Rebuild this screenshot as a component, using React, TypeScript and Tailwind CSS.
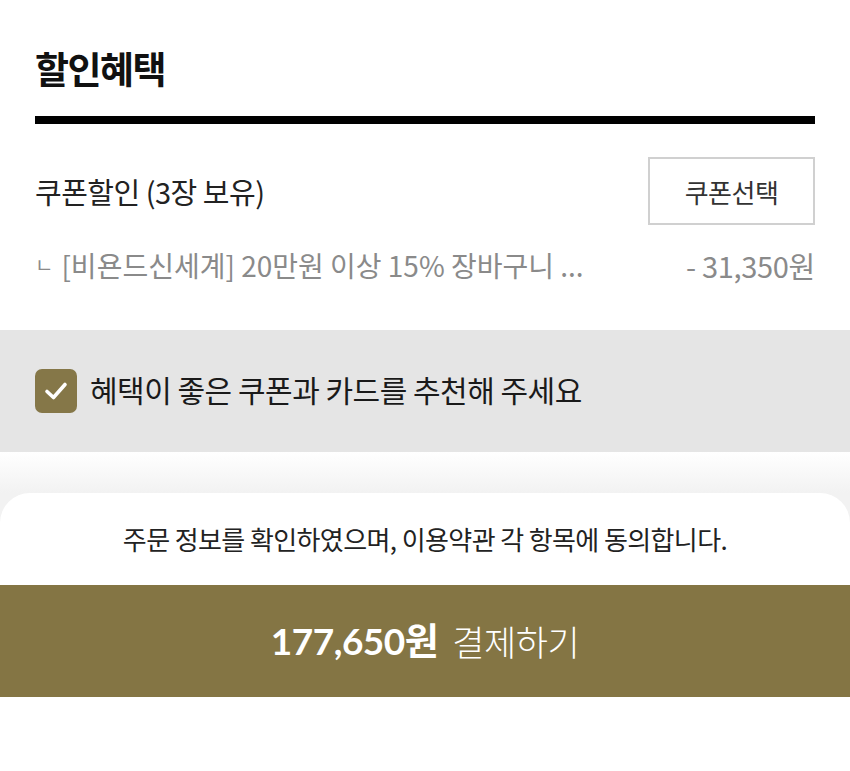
export default function App() {
  const font = { fontFamily: '"Noto Sans CJK KR", "Noto Sans", sans-serif' };
  return (
    <div className="w-[850px] h-[771px] bg-white overflow-hidden" style={font}>
      {/* 할인혜택 */}
      <div className="px-[35px] pt-[44px]">
        <h2 className="text-[37px] leading-[48px] font-bold text-[#111] tracking-[-1.5px]">할인혜택</h2>
        <div className="mt-[24px] h-[8px] bg-black" />
        <div className="flex items-center justify-between mt-[33px]">
          <span className="text-[29px] leading-[42px] text-[#222] tracking-[-0.5px]">쿠폰할인 (3장 보유)</span>
          <button className="w-[167px] h-[68px] border-2 border-[#d0d0d0] bg-white text-[26px] text-[#333] tracking-[-0.5px]">
            쿠폰선택
          </button>
        </div>
        <div className="flex items-center justify-between mt-[19px] text-[28px] leading-[42px] text-[#8a8a8a]">
          <span>
            <span className="text-[20px] align-top mr-[8px]">ㄴ</span>[비욘드신세계] 20만원 이상 15% 장바구니 ...
          </span>
          <span className="text-[29px] tracking-[-0.3px]">- 31,350원</span>
        </div>
      </div>

      {/* 추천 체크 */}
      <div className="mt-[44px] h-[122px] bg-[#e5e5e5] flex items-center px-[35px] gap-[13px]">
        <div className="w-[42px] h-[44px] rounded-[7px] bg-[#857748] flex items-center justify-center">
          <svg width="24" height="20" viewBox="0 0 24 20" fill="none">
            <path d="M3 10.5 L9.5 16.5 L21 3.5" stroke="white" strokeWidth="3.6" strokeLinecap="round" strokeLinejoin="round" />
          </svg>
        </div>
        <span className="text-[30px] leading-[40px] pb-[4px] text-[#1a1a1a] tracking-[-0.5px]">혜택이 좋은 쿠폰과 카드를 추천해 주세요</span>
      </div>

      {/* 하단 시트 */}
      <div className="h-[41px] bg-gradient-to-b from-white to-[#f2f2f2]" />
      <div className="bg-[#f2f2f2]">
        <div className="bg-white rounded-t-[30px] pt-[29px]">
          <p className="text-center text-[26px] text-[#222] tracking-[-0.6px] leading-[34px]">
            주문 정보를 확인하였으며, 이용약관 각 항목에 동의합니다.
          </p>
          <button className="mt-[29px] w-full h-[112px] bg-[#847544] flex items-center justify-center gap-[14px] text-white">
            <span className="text-[37px] font-bold tracking-[-0.5px]" style={{ fontFamily: 'Lato, "Noto Sans CJK KR", sans-serif' }}>
              177,650원
            </span>
            <span className="text-[35px] font-light tracking-[-0.5px]">결제하기</span>
          </button>
          <div className="h-[80px] bg-white" />
        </div>
      </div>
    </div>
  );
}
